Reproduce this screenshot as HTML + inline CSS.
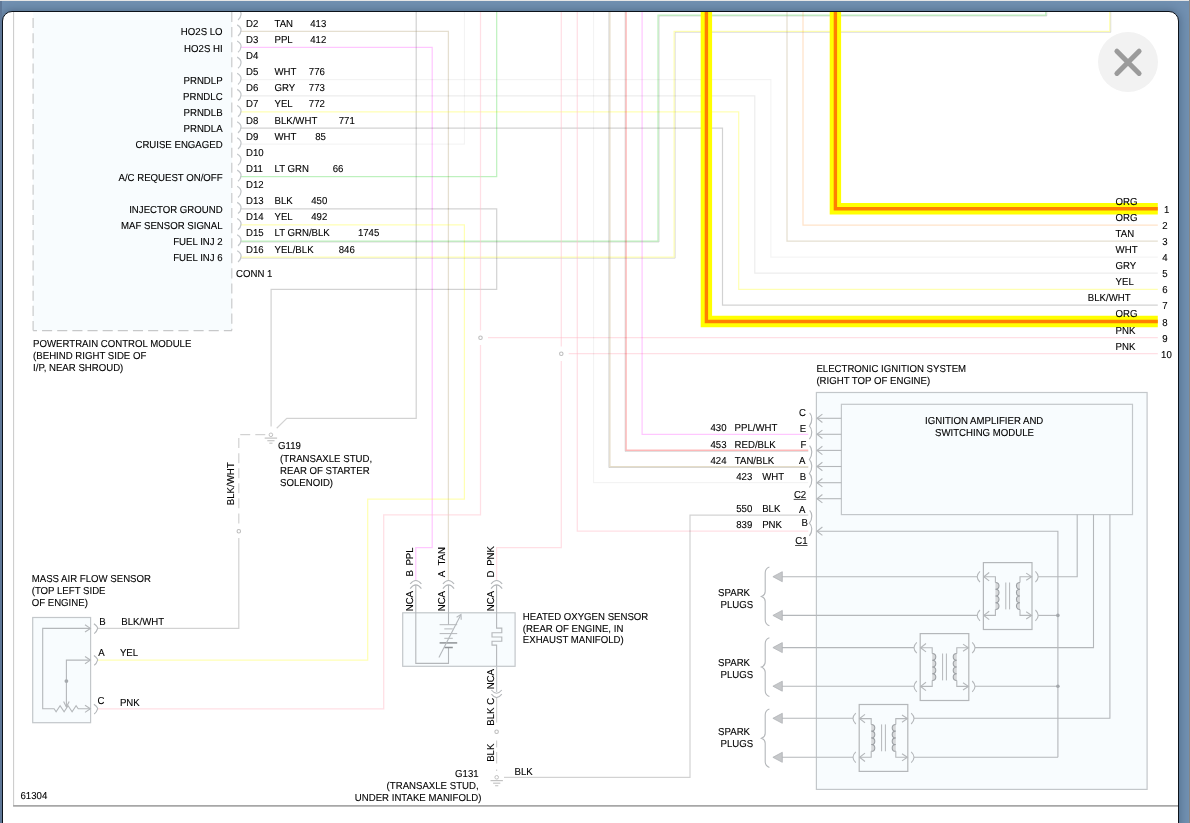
<!DOCTYPE html>
<html lang="en"><head><meta charset="utf-8"><title>Wiring Diagram</title>
<style>
html,body{margin:0;padding:0}
body{width:1190px;height:823px;overflow:hidden;position:relative;background:#7190b1;font-family:"Liberation Sans",Arial,sans-serif}
.topstrip{position:absolute;left:0;top:0;width:1190px;height:1px;background:#e6e6e6}
.rightstrip{position:absolute;left:1189px;top:0;width:1px;height:823px;background:#858585}
.leftshade{position:absolute;left:0;top:1px;width:2px;height:822px;background:#5e7797}
.dialog{position:absolute;left:2px;top:11px;width:1175px;height:840px;background:#fff;border:1px solid #0b1119;border-radius:10px;box-shadow:0 0 8px 1px rgba(20,35,55,.32)}
.sheet{position:absolute;left:13px;top:12px;width:1165px;height:793px;border-left:1.3px solid #c4c4c4;border-bottom:1.6px solid #a6a6a6;box-sizing:content-box}
svg{position:absolute;left:0;top:0;opacity:.999;will-change:transform}
svg text{font-family:"Liberation Sans",Arial,sans-serif;text-rendering:geometricPrecision}
.close{position:absolute;left:1098px;top:32px;width:60px;height:60px;border-radius:50%;background:#f2f2f2}
</style></head><body>
<div class="topstrip"></div>
<div class="dialog"></div><div class="leftshade"></div>
<div class="rightstrip"></div>
<svg width="1190" height="823" viewBox="0 0 1190 823">
<defs><clipPath id="inner"><rect x="3" y="12" width="1175" height="811"/></clipPath></defs>
<g clip-path="url(#inner)">
<path d="M13.6 12 V806" stroke="#cbcbcb" stroke-width="1.05" fill="none"/>
<path d="M13.1 805.8 H1178" stroke="#a7a7a7" stroke-width="1.8" fill="none"/>
<g id="boxes">
<rect x="33.1" y="12" width="198.9" height="318.5" fill="#f8fcfe"/>
<path d="M33.1 12.93 V330.5" stroke="#c7c8c9" stroke-width="1.15" fill="none" stroke-dasharray="10.08 5.07" stroke-dashoffset="10.08"/>
<path d="M33.1 330.55 H232" stroke="#c7c8c9" stroke-width="1.15" fill="none" stroke-dasharray="10.08 5.07" stroke-dashoffset="6.2"/>
<path d="M231.8 12 V330.5" stroke="#c7c8c9" stroke-width="1.15" fill="none" stroke-dasharray="10.05 5.03"/>
<rect x="32.7" y="617.5" width="57.9" height="105.2" fill="#f8fcfe" stroke="#c3c7ca" stroke-width="1.2"/>
<rect x="402.7" y="612.8" width="112.4" height="53.5" fill="#f8fcfe" stroke="#c3c7ca" stroke-width="1.2"/>
<rect x="816.4" y="392.5" width="330.7" height="396.9" fill="#f8fcfe" stroke="#c3c7ca" stroke-width="1.2"/>
<rect x="841.4" y="404.3" width="291.1" height="110.3" fill="none" stroke="#c3c7ca" stroke-width="1.2"/>
</g>
<g id="wires">
<path d="M416.2 12 L416.2 418.3 L286.8 418.3 L276.7 428.3" stroke="rgba(0,0,0,0.18)" stroke-width="1.25" fill="none" />
<path d="M240.5 31.25 L448.4 31.25 L448.4 580" stroke="rgba(178,160,118,0.34)" stroke-width="1.25" fill="none" />
<path d="M240.5 47.39 L432.2 47.39 L432.2 547.7 L415.8 547.7 L415.8 580" stroke="rgba(255,0,255,0.225)" stroke-width="1.25" fill="none" />
<path d="M240.5 79.67 L770.9 79.67 L770.9 257.2 L1157.8 257.2" stroke="rgba(0,0,0,0.05)" stroke-width="1.25" fill="none" />
<path d="M240.5 95.81 L754.8 95.81 L754.8 273.2 L1157.8 273.2" stroke="rgba(0,0,0,0.08)" stroke-width="1.25" fill="none" />
<path d="M240.5 111.95 L738.7 111.95 L738.7 289.3 L1157.8 289.3" stroke="rgba(255,255,0,0.30)" stroke-width="1.25" fill="none" />
<path d="M240.5 128.09 L722.5 128.09 L722.5 305.2 L1157.8 305.2" stroke="rgba(0,0,0,0.18)" stroke-width="1.25" fill="none" />
<path d="M240.5 144.23 L464.4 144.23 L464.4 12" stroke="rgba(0,0,0,0.05)" stroke-width="1.25" fill="none" />
<path d="M240.5 176.51 L496.7 176.51 L496.7 12" stroke="rgba(0,200,0,0.26)" stroke-width="1.25" fill="none" />
<path d="M240.5 208.79 L496.7 208.79 L496.7 289.4 L271.1 289.4 L271.1 426.5" stroke="rgba(0,0,0,0.18)" stroke-width="1.25" fill="none" />
<path d="M240.5 224.93 L464.4 224.93 L464.4 499.1 L367.7 499.1 L367.7 660.2 L97.7 660.2" stroke="rgba(255,255,0,0.30)" stroke-width="1.25" fill="none" />
<path d="M240.5 242.07 L659.1 242.07 L659.1 16 L1046.8 16 L1046.8 12" stroke="rgba(0,0,0,0.16)" stroke-width="0.9" fill="none" />
<path d="M240.5 241.07 L658 241.07 L658 15 L1045.7 15 L1045.7 12" stroke="rgba(0,200,0,0.26)" stroke-width="1.25" fill="none" />
<path d="M240.5 258.21 L675.2 258.21 L675.2 32.3 L1110.8 32.3 L1110.8 12" stroke="rgba(0,0,0,0.16)" stroke-width="0.9" fill="none" />
<path d="M240.5 257.21 L674.1 257.21 L674.1 31.3 L1109.7 31.3 L1109.7 12" stroke="rgba(255,255,0,0.30)" stroke-width="1.25" fill="none" />
<path d="M480.5 12 L480.5 330.5" stroke="rgba(255,192,203,0.5)" stroke-width="1.25" fill="none" />
<path d="M480.5 345 L480.5 514.8 L383.7 514.8 L383.7 708.9 L97.7 708.9" stroke="rgba(255,192,203,0.5)" stroke-width="1.25" fill="none" />
<path d="M488 337.6 L1157.8 337.6" stroke="rgba(255,192,203,0.5)" stroke-width="1.25" fill="none" />
<path d="M561.3 12 L561.3 346.5" stroke="rgba(255,192,203,0.5)" stroke-width="1.25" fill="none" />
<path d="M561.3 361 L561.3 547.7 L496.6 547.7 L496.6 580" stroke="rgba(255,192,203,0.5)" stroke-width="1.25" fill="none" />
<path d="M568.7 353.6 L1157.8 353.6" stroke="rgba(255,192,203,0.5)" stroke-width="1.25" fill="none" />
<path d="M577.3 12 L577.3 531.2 L808.3 531.2" stroke="rgba(255,192,203,0.5)" stroke-width="1.25" fill="none" />
<path d="M593.6 12 L593.6 482.7 L808.3 482.7" stroke="rgba(0,0,0,0.05)" stroke-width="1.25" fill="none" />
<path d="M608.8 12 L608.8 467.5 L808.3 467.5" stroke="rgba(0,0,0,0.16)" stroke-width="0.9" fill="none" />
<path d="M609.9 12 L609.9 466.5 L808.3 466.5" stroke="rgba(190,170,120,0.4)" stroke-width="1.25" fill="none" />
<path d="M625.1 12 L625.1 451.4 L808.3 451.4" stroke="rgba(0,0,0,0.16)" stroke-width="0.9" fill="none" />
<path d="M626.1 12 L626.1 450.3 L808.3 450.3" stroke="rgba(255,0,0,0.275)" stroke-width="1.4" fill="none" />
<path d="M642.1 12 L642.1 434.3 L808.3 434.3" stroke="rgba(255,0,255,0.225)" stroke-width="1.25" fill="none" />
<path d="M787 12 L787 241.2 L1157.8 241.2" stroke="rgba(178,160,118,0.34)" stroke-width="1.25" fill="none" />
<path d="M803 12 L803 225 L1157.8 225" stroke="rgba(255,128,0,0.22)" stroke-width="1.25" fill="none" />
<path d="M808.3 515.2 L690 515.2 L690 777.4 L504 777.4" stroke="rgba(0,0,0,0.18)" stroke-width="1.25" fill="none" />
<path d="M97.7 628.4 L238.8 628.4 L238.8 538" stroke="rgba(0,0,0,0.18)" stroke-width="1.25" fill="none" />
<path d="M265.3 434.5 L238.8 434.5 L238.8 524.2" stroke="rgba(0,0,0,0.18)" stroke-width="1.25" fill="none" stroke-dasharray="10 5.06"/>
<path d="M496.6 666.3 L496.6 692" stroke="#c3c7ca" stroke-width="1.25" fill="none" />
<path d="M496.6 698 L496.6 722.5" stroke="rgba(0,0,0,0.18)" stroke-width="1.25" fill="none" />
<path d="M496.6 740.4 L496.6 771" stroke="rgba(0,0,0,0.18)" stroke-width="1.25" fill="none" stroke-dasharray="7 4.5 11.5 6 1.5 20"/>
</g>
<g id="hl" fill="none" stroke-linejoin="miter" stroke-linecap="butt">
<path d="M706.4 12 V321.5 H1157.8" stroke="#ffff00" stroke-width="11.4"/>
<path d="M835.4 12 V208.7 H1157.8" stroke="#ffff00" stroke-width="11.4"/>
<path d="M706.4 12 V321.5 H1157.8" stroke="#ff7f00" stroke-width="3.4"/>
<path d="M835.4 12 V208.7 H1157.8" stroke="#ff7f00" stroke-width="3.4"/>
</g>
<g id="symbols">
<circle cx="480.5" cy="337.7" r="1.75" fill="#fff" stroke="#bcbcbc" stroke-width="1.05"/>
<circle cx="561.3" cy="353.7" r="1.75" fill="#fff" stroke="#bcbcbc" stroke-width="1.05"/>
<circle cx="238.8" cy="531.3" r="1.75" fill="#fff" stroke="#bcbcbc" stroke-width="1.05"/>
<circle cx="496.6" cy="731.7" r="1.75" fill="#fff" stroke="#bcbcbc" stroke-width="1.05"/>
<path d="M237.2 8.71 C239.6 10.11 241.3 12.51 241 14.51 C240.8 16.91 239.8 18.71 238 19.91" stroke="#c3c7ca" stroke-width="1.25" fill="none" />
<path d="M237.2 24.85 C239.6 26.25 241.3 28.65 241 30.65 C240.8 33.05 239.8 34.85 238 36.05" stroke="#c3c7ca" stroke-width="1.25" fill="none" />
<path d="M237.2 40.99 C239.6 42.39 241.3 44.79 241 46.79 C240.8 49.19 239.8 50.99 238 52.19" stroke="#c3c7ca" stroke-width="1.25" fill="none" />
<path d="M237.2 57.13 C239.6 58.53 241.3 60.93 241 62.93 C240.8 65.33 239.8 67.13 238 68.33" stroke="#c3c7ca" stroke-width="1.25" fill="none" />
<path d="M237.2 73.27 C239.6 74.67 241.3 77.07 241 79.07 C240.8 81.47 239.8 83.27 238 84.47" stroke="#c3c7ca" stroke-width="1.25" fill="none" />
<path d="M237.2 89.41 C239.6 90.81 241.3 93.21 241 95.21 C240.8 97.61 239.8 99.41 238 100.61" stroke="#c3c7ca" stroke-width="1.25" fill="none" />
<path d="M237.2 105.55 C239.6 106.95 241.3 109.35 241 111.35 C240.8 113.75 239.8 115.55 238 116.75" stroke="#c3c7ca" stroke-width="1.25" fill="none" />
<path d="M237.2 121.69 C239.6 123.09 241.3 125.49 241 127.49 C240.8 129.89 239.8 131.69 238 132.89" stroke="#c3c7ca" stroke-width="1.25" fill="none" />
<path d="M237.2 137.83 C239.6 139.23 241.3 141.63 241 143.63 C240.8 146.03 239.8 147.83 238 149.03" stroke="#c3c7ca" stroke-width="1.25" fill="none" />
<path d="M237.2 153.97 C239.6 155.37 241.3 157.77 241 159.77 C240.8 162.17 239.8 163.97 238 165.17" stroke="#c3c7ca" stroke-width="1.25" fill="none" />
<path d="M237.2 170.11 C239.6 171.51 241.3 173.91 241 175.91 C240.8 178.31 239.8 180.11 238 181.31" stroke="#c3c7ca" stroke-width="1.25" fill="none" />
<path d="M237.2 186.25 C239.6 187.65 241.3 190.05 241 192.05 C240.8 194.45 239.8 196.25 238 197.45" stroke="#c3c7ca" stroke-width="1.25" fill="none" />
<path d="M237.2 202.39 C239.6 203.79 241.3 206.19 241 208.19 C240.8 210.59 239.8 212.39 238 213.59" stroke="#c3c7ca" stroke-width="1.25" fill="none" />
<path d="M237.2 218.53 C239.6 219.93 241.3 222.33 241 224.33 C240.8 226.73 239.8 228.53 238 229.73" stroke="#c3c7ca" stroke-width="1.25" fill="none" />
<path d="M237.2 234.67 C239.6 236.07 241.3 238.47 241 240.47 C240.8 242.87 239.8 244.67 238 245.87" stroke="#c3c7ca" stroke-width="1.25" fill="none" />
<path d="M237.2 250.81 C239.6 252.21 241.3 254.61 241 256.61 C240.8 259.01 239.8 260.81 238 262.01" stroke="#c3c7ca" stroke-width="1.25" fill="none" />
<circle cx="270.9" cy="434.8" r="1.8" fill="#fff" stroke="#c0c0c0" stroke-width="1.0"/>
<path d="M264.7 438.1 L277.1 438.1" stroke="#c2c2c2" stroke-width="1.2" fill="none" />
<path d="M267.3 440.7 L274.5 440.7" stroke="#c6c6c6" stroke-width="1.2" fill="none" />
<path d="M269.3 443.2 L272.5 443.2" stroke="#cacaca" stroke-width="1.2" fill="none" />
<circle cx="496.7" cy="777.3" r="1.8" fill="#fff" stroke="#c0c0c0" stroke-width="1.0"/>
<path d="M490.5 780.6 L502.9 780.6" stroke="#c2c2c2" stroke-width="1.2" fill="none" />
<path d="M493.1 783.2 L500.3 783.2" stroke="#c6c6c6" stroke-width="1.2" fill="none" />
<path d="M495.1 785.7 L498.3 785.7" stroke="#cacaca" stroke-width="1.2" fill="none" />
<path d="M90.4 628.4 L42.7 628.4 L42.7 708.8 L54.1 708.8 L56.1 711.8 L60.1 705.8 L64.1 711.8 L68.1 705.8 L72.1 711.8 L76.1 705.8 L78.2 708.8 L90.4 708.8" stroke="#b4b7ba" stroke-width="1.1" fill="none" />
<path d="M90.4 660.1 L66.4 660.1 L66.4 706.5" stroke="#b4b7ba" stroke-width="1.1" fill="none" />
<path d="M63.6 701.5 L66.4 707 L69.2 701.5" stroke="#b4b7ba" stroke-width="1.1" fill="none" />
<path d="M85 624.8 L90.4 628.4 L85 632" stroke="#b4b7ba" stroke-width="1.1" fill="none" />
<path d="M85 656.5 L90.4 660.1 L85 663.7" stroke="#b4b7ba" stroke-width="1.1" fill="none" />
<path d="M85 705.2 L90.4 708.8 L85 712.4" stroke="#b4b7ba" stroke-width="1.1" fill="none" />
<circle cx="66.4" cy="681.1" r="1.9" fill="#a6aaae"/>
<path d="M93.9 623.8 Q98.6 627.4 97.4 629 Q96.6 632 94.2 633.6" stroke="#b4b7ba" stroke-width="1.1" fill="none" />
<path d="M93.9 655.5 Q98.6 659.1 97.4 660.7 Q96.6 663.7 94.2 665.3" stroke="#b4b7ba" stroke-width="1.1" fill="none" />
<path d="M93.9 704.2 Q98.6 707.8 97.4 709.4 Q96.6 712.4 94.2 714" stroke="#b4b7ba" stroke-width="1.1" fill="none" />
<path d="M415.8 592 L415.8 663.4 L448.5 663.4 L448.5 647.5" stroke="#b4b7ba" stroke-width="1.1" fill="none" />
<path d="M448.5 592 L448.5 624.7" stroke="#b4b7ba" stroke-width="1.1" fill="none" />
<path d="M439.6 624.7 L457.2 624.7" stroke="#b4b7ba" stroke-width="1.0" fill="none" />
<path d="M444.3 628.9 L452.8 628.9" stroke="#b4b7ba" stroke-width="1.0" fill="none" />
<path d="M439.6 633.6 L457.2 633.6" stroke="#b4b7ba" stroke-width="1.0" fill="none" />
<path d="M444.3 638.3 L452.8 638.3" stroke="#b4b7ba" stroke-width="1.0" fill="none" />
<path d="M439.6 642.9 L457.2 642.9" stroke="#8f9396" stroke-width="1.5" fill="none" />
<path d="M444.3 647.5 L452.8 647.5" stroke="#8f9396" stroke-width="1.5" fill="none" />
<path d="M438.9 657.4 L460.6 615.2" stroke="#b4b8bc" stroke-width="1.1" fill="none" />
<path d="M456.6 617.2 L461 614.4 L461.2 619.8" stroke="#b4b8bc" stroke-width="1.1" fill="none" />
<path d="M496.6 592 L496.6 628.1 L501.8 628.1 L501.8 632.7 L492 632.7 L492 637 L501.8 637 L501.8 641.2 L492 641.2 L492 645.1 L496.6 645.1 L496.6 666.3" stroke="#b4b7ba" stroke-width="1.1" fill="none" />
<path d="M410.2 584 Q415.8 577 421.4 584" stroke="#b4b7ba" stroke-width="1.1" fill="none" />
<path d="M410.2 588.6 Q415.8 581.2 421.4 588.6" stroke="#b4b7ba" stroke-width="1.1" fill="none" />
<path d="M415.8 585 L415.8 592" stroke="#b4b7ba" stroke-width="1.1" fill="none" />
<path d="M442.9 584 Q448.5 577 454.1 584" stroke="#b4b7ba" stroke-width="1.1" fill="none" />
<path d="M442.9 588.6 Q448.5 581.2 454.1 588.6" stroke="#b4b7ba" stroke-width="1.1" fill="none" />
<path d="M448.5 585 L448.5 592" stroke="#b4b7ba" stroke-width="1.1" fill="none" />
<path d="M491 584 Q496.6 577 502.2 584" stroke="#b4b7ba" stroke-width="1.1" fill="none" />
<path d="M491 588.6 Q496.6 581.2 502.2 588.6" stroke="#b4b7ba" stroke-width="1.1" fill="none" />
<path d="M496.6 585 L496.6 592" stroke="#b4b7ba" stroke-width="1.1" fill="none" />
<path d="M491.4 690 Q496.6 696.4 501.8 690" stroke="#b4b7ba" stroke-width="1.1" fill="none" />
<path d="M491.4 694.2 Q496.6 701 501.8 694.2" stroke="#b4b7ba" stroke-width="1.1" fill="none" />
<path d="M817 418.3 L841.4 418.3" stroke="#b4b7ba" stroke-width="1.1" fill="none" />
<path d="M822.4 414.1 L817 418.3 L822.4 422.5" stroke="#b4b7ba" stroke-width="1.1" fill="none" />
<path d="M817 434.3 L841.4 434.3" stroke="#b4b7ba" stroke-width="1.1" fill="none" />
<path d="M822.4 430.1 L817 434.3 L822.4 438.5" stroke="#b4b7ba" stroke-width="1.1" fill="none" />
<path d="M817 450.4 L841.4 450.4" stroke="#b4b7ba" stroke-width="1.1" fill="none" />
<path d="M822.4 446.2 L817 450.4 L822.4 454.6" stroke="#b4b7ba" stroke-width="1.1" fill="none" />
<path d="M817 466.5 L841.4 466.5" stroke="#b4b7ba" stroke-width="1.1" fill="none" />
<path d="M822.4 462.3 L817 466.5 L822.4 470.7" stroke="#b4b7ba" stroke-width="1.1" fill="none" />
<path d="M817 482.7 L841.4 482.7" stroke="#b4b7ba" stroke-width="1.1" fill="none" />
<path d="M822.4 478.5 L817 482.7 L822.4 486.9" stroke="#b4b7ba" stroke-width="1.1" fill="none" />
<path d="M817 498.7 L841.4 498.7" stroke="#b4b7ba" stroke-width="1.1" fill="none" />
<path d="M822.4 494.5 L817 498.7 L822.4 502.9" stroke="#b4b7ba" stroke-width="1.1" fill="none" />
<path d="M817 531.2 L1057.9 531.2 L1057.9 757.3" stroke="#b4b7ba" stroke-width="1.1" fill="none" />
<path d="M822.4 527 L817 531.2 L822.4 535.4" stroke="#b4b7ba" stroke-width="1.1" fill="none" />
<path d="M809.6 412.8 C812.2 415.4 812.9 421.5 809.4 426.1 C812.2 428.7 812.9 434.6 809.4 439.2" stroke="#b4b7ba" stroke-width="1.15" fill="none" />
<path d="M809.6 445.6 C812.2 448.2 812.9 455 809.4 459.6 C812.2 462.2 812.9 468.9 809.4 473.5 C812.2 476.1 812.9 482.9 809.4 487.5" stroke="#b4b7ba" stroke-width="1.15" fill="none" />
<path d="M809.6 510.3 C812.2 512.9 812.9 518.5 809.4 523.1 C812.2 525.7 812.9 531.3 809.4 535.9" stroke="#b4b7ba" stroke-width="1.15" fill="none" />
<rect x="983.4" y="562.6" width="48.6" height="66.9" fill="none" stroke="#b4b7ba" stroke-width="1.2"/>
<path d="M995.4 582.5 C1000.2 582.5 1000.2 589.225 995.4 589.225 C1000.2 589.225 1000.2 595.95 995.4 595.95 C1000.2 595.95 1000.2 602.675 995.4 602.675 C1000.2 602.675 1000.2 609.4 995.4 609.4" fill="#d6d8da" stroke="#9a9ea2" stroke-width="1.05"/>
<path d="M1020 582.5 C1015.2 582.5 1015.2 589.225 1020 589.225 C1015.2 589.225 1015.2 595.95 1020 595.95 C1015.2 595.95 1015.2 602.675 1020 602.675 C1015.2 602.675 1015.2 609.4 1020 609.4" fill="#d6d8da" stroke="#9a9ea2" stroke-width="1.05"/>
<path d="M983.7 576.7 L995.4 576.7 L995.4 582.5" stroke="#b4b7ba" stroke-width="1.1" fill="none" />
<path d="M995.4 609.4 L995.4 615.4 L983.7 615.4" stroke="#b4b7ba" stroke-width="1.1" fill="none" />
<path d="M1031.7 576.7 L1020 576.7 L1020 582.5" stroke="#b4b7ba" stroke-width="1.1" fill="none" />
<path d="M1020 609.4 L1020 615.4 L1031.7 615.4" stroke="#b4b7ba" stroke-width="1.1" fill="none" />
<path d="M989.2 572.5 L983.8 576.7 L989.2 580.9" stroke="#b4b7ba" stroke-width="1.1" fill="none" />
<path d="M1026.2 573.1 L1031.6 576.7 L1026.2 580.3" stroke="#b4b7ba" stroke-width="1.1" fill="none" />
<path d="M980 571.3 Q974.4 576.7 980 582.1" stroke="#b4b7ba" stroke-width="1.1" fill="none" />
<path d="M1035.4 571.3 Q1041 576.7 1035.4 582.1" stroke="#b4b7ba" stroke-width="1.1" fill="none" />
<path d="M989.2 611.2 L983.8 615.4 L989.2 619.6" stroke="#b4b7ba" stroke-width="1.1" fill="none" />
<path d="M1026.2 611.8 L1031.6 615.4 L1026.2 619" stroke="#b4b7ba" stroke-width="1.1" fill="none" />
<path d="M980 610 Q974.4 615.4 980 620.8" stroke="#b4b7ba" stroke-width="1.1" fill="none" />
<path d="M1035.4 610 Q1041 615.4 1035.4 620.8" stroke="#b4b7ba" stroke-width="1.1" fill="none" />
<path d="M1005.8 582.5 L1005.8 609.4" stroke="#b4b7ba" stroke-width="1.0" fill="none" />
<path d="M1009.6 582.5 L1009.6 609.4" stroke="#b4b7ba" stroke-width="1.0" fill="none" />
<rect x="920.2" y="633.6" width="48.6" height="66.9" fill="none" stroke="#b4b7ba" stroke-width="1.2"/>
<path d="M932.2 653.5 C937 653.5 937 660.225 932.2 660.225 C937 660.225 937 666.95 932.2 666.95 C937 666.95 937 673.675 932.2 673.675 C937 673.675 937 680.4 932.2 680.4" fill="#d6d8da" stroke="#9a9ea2" stroke-width="1.05"/>
<path d="M956.8 653.5 C952 653.5 952 660.225 956.8 660.225 C952 660.225 952 666.95 956.8 666.95 C952 666.95 952 673.675 956.8 673.675 C952 673.675 952 680.4 956.8 680.4" fill="#d6d8da" stroke="#9a9ea2" stroke-width="1.05"/>
<path d="M920.5 647.7 L932.2 647.7 L932.2 653.5" stroke="#b4b7ba" stroke-width="1.1" fill="none" />
<path d="M932.2 680.4 L932.2 686.4 L920.5 686.4" stroke="#b4b7ba" stroke-width="1.1" fill="none" />
<path d="M968.5 647.7 L956.8 647.7 L956.8 653.5" stroke="#b4b7ba" stroke-width="1.1" fill="none" />
<path d="M956.8 680.4 L956.8 686.4 L968.5 686.4" stroke="#b4b7ba" stroke-width="1.1" fill="none" />
<path d="M926 643.5 L920.6 647.7 L926 651.9" stroke="#b4b7ba" stroke-width="1.1" fill="none" />
<path d="M963 644.1 L968.4 647.7 L963 651.3" stroke="#b4b7ba" stroke-width="1.1" fill="none" />
<path d="M916.8 642.3 Q911.2 647.7 916.8 653.1" stroke="#b4b7ba" stroke-width="1.1" fill="none" />
<path d="M972.2 642.3 Q977.8 647.7 972.2 653.1" stroke="#b4b7ba" stroke-width="1.1" fill="none" />
<path d="M926 682.2 L920.6 686.4 L926 690.6" stroke="#b4b7ba" stroke-width="1.1" fill="none" />
<path d="M963 682.8 L968.4 686.4 L963 690" stroke="#b4b7ba" stroke-width="1.1" fill="none" />
<path d="M916.8 681 Q911.2 686.4 916.8 691.8" stroke="#b4b7ba" stroke-width="1.1" fill="none" />
<path d="M972.2 681 Q977.8 686.4 972.2 691.8" stroke="#b4b7ba" stroke-width="1.1" fill="none" />
<path d="M942.6 653.5 L942.6 680.4" stroke="#b4b7ba" stroke-width="1.0" fill="none" />
<path d="M946.4 653.5 L946.4 680.4" stroke="#b4b7ba" stroke-width="1.0" fill="none" />
<rect x="859.2" y="704.5" width="48.6" height="66.9" fill="none" stroke="#b4b7ba" stroke-width="1.2"/>
<path d="M871.2 724.4 C876 724.4 876 731.125 871.2 731.125 C876 731.125 876 737.85 871.2 737.85 C876 737.85 876 744.575 871.2 744.575 C876 744.575 876 751.3 871.2 751.3" fill="#d6d8da" stroke="#9a9ea2" stroke-width="1.05"/>
<path d="M895.8 724.4 C891 724.4 891 731.125 895.8 731.125 C891 731.125 891 737.85 895.8 737.85 C891 737.85 891 744.575 895.8 744.575 C891 744.575 891 751.3 895.8 751.3" fill="#d6d8da" stroke="#9a9ea2" stroke-width="1.05"/>
<path d="M859.5 718.6 L871.2 718.6 L871.2 724.4" stroke="#b4b7ba" stroke-width="1.1" fill="none" />
<path d="M871.2 751.3 L871.2 757.3 L859.5 757.3" stroke="#b4b7ba" stroke-width="1.1" fill="none" />
<path d="M907.5 718.6 L895.8 718.6 L895.8 724.4" stroke="#b4b7ba" stroke-width="1.1" fill="none" />
<path d="M895.8 751.3 L895.8 757.3 L907.5 757.3" stroke="#b4b7ba" stroke-width="1.1" fill="none" />
<path d="M865 714.4 L859.6 718.6 L865 722.8" stroke="#b4b7ba" stroke-width="1.1" fill="none" />
<path d="M902 715 L907.4 718.6 L902 722.2" stroke="#b4b7ba" stroke-width="1.1" fill="none" />
<path d="M855.8 713.2 Q850.2 718.6 855.8 724" stroke="#b4b7ba" stroke-width="1.1" fill="none" />
<path d="M911.2 713.2 Q916.8 718.6 911.2 724" stroke="#b4b7ba" stroke-width="1.1" fill="none" />
<path d="M865 753.1 L859.6 757.3 L865 761.5" stroke="#b4b7ba" stroke-width="1.1" fill="none" />
<path d="M902 753.7 L907.4 757.3 L902 760.9" stroke="#b4b7ba" stroke-width="1.1" fill="none" />
<path d="M855.8 751.9 Q850.2 757.3 855.8 762.7" stroke="#b4b7ba" stroke-width="1.1" fill="none" />
<path d="M911.2 751.9 Q916.8 757.3 911.2 762.7" stroke="#b4b7ba" stroke-width="1.1" fill="none" />
<path d="M881.6 724.4 L881.6 751.3" stroke="#b4b7ba" stroke-width="1.0" fill="none" />
<path d="M885.4 724.4 L885.4 751.3" stroke="#b4b7ba" stroke-width="1.0" fill="none" />
<path d="M782 576.7 L977.2 576.7" stroke="#b4b7ba" stroke-width="1.1" fill="none" />
<path d="M772.9 576.7 L782.3 571.7 V581.7 Z" fill="#c6c8ca" stroke="#b0b3b6" stroke-width="0.8"/>
<path d="M782 615.4 L977.2 615.4" stroke="#b4b7ba" stroke-width="1.1" fill="none" />
<path d="M772.9 615.4 L782.3 610.4 V620.4 Z" fill="#c6c8ca" stroke="#b0b3b6" stroke-width="0.8"/>
<path d="M782 647.6 L914 647.6" stroke="#b4b7ba" stroke-width="1.1" fill="none" />
<path d="M772.9 647.6 L782.3 642.6 V652.6 Z" fill="#c6c8ca" stroke="#b0b3b6" stroke-width="0.8"/>
<path d="M782 686.2 L914 686.2" stroke="#b4b7ba" stroke-width="1.1" fill="none" />
<path d="M772.9 686.2 L782.3 681.2 V691.2 Z" fill="#c6c8ca" stroke="#b0b3b6" stroke-width="0.8"/>
<path d="M782 718.3 L853 718.3" stroke="#b4b7ba" stroke-width="1.1" fill="none" />
<path d="M772.9 718.3 L782.3 713.3 V723.3 Z" fill="#c6c8ca" stroke="#b0b3b6" stroke-width="0.8"/>
<path d="M782 757.3 L853 757.3" stroke="#b4b7ba" stroke-width="1.1" fill="none" />
<path d="M772.9 757.3 L782.3 752.3 V762.3 Z" fill="#c6c8ca" stroke="#b0b3b6" stroke-width="0.8"/>
<path d="M1038.2 576.7 L1077.2 576.7 L1077.2 514.6" stroke="#b4b7ba" stroke-width="1.1" fill="none" />
<path d="M1038.2 615.4 L1057.9 615.4" stroke="#b4b7ba" stroke-width="1.1" fill="none" />
<path d="M975 647.6 L1093.5 647.6 L1093.5 514.6" stroke="#b4b7ba" stroke-width="1.1" fill="none" />
<path d="M975 686.2 L1057.9 686.2" stroke="#b4b7ba" stroke-width="1.1" fill="none" />
<path d="M914 718.3 L1109.9 718.3 L1109.9 514.6" stroke="#b4b7ba" stroke-width="1.1" fill="none" />
<path d="M914 757.3 L1057.9 757.3" stroke="#b4b7ba" stroke-width="1.1" fill="none" />
<circle cx="1057.9" cy="615.4" r="1.8" fill="#a4a8ac"/><circle cx="1057.9" cy="686.2" r="1.8" fill="#a4a8ac"/>
<path d="M769.4 567 Q765.2 568.5 765.2 573 V591.4 Q765.2 594.9 761.4 596.4 Q765.2 597.9 765.2 601.4 V619.8 Q765.2 624.3 769.4 625.8" stroke="#b4b7ba" stroke-width="1.1" fill="none" />
<path d="M769.4 637.8 Q765.2 639.3 765.2 643.8 V662.1 Q765.2 665.6 761.4 667.1 Q765.2 668.6 765.2 672.1 V690.4 Q765.2 694.9 769.4 696.4" stroke="#b4b7ba" stroke-width="1.1" fill="none" />
<path d="M769.4 709 Q765.2 710.5 765.2 715 V733.2 Q765.2 736.7 761.4 738.2 Q765.2 739.7 765.2 743.2 V761.4 Q765.2 765.9 769.4 767.4" stroke="#b4b7ba" stroke-width="1.1" fill="none" />
</g>
<g id="labels" fill="#000" stroke="#000" stroke-width="0.12" font-size="10.08px">
<text transform="translate(222.6 35.15) scale(0.955 1)" text-anchor="end">HO2S LO</text>
<text transform="translate(222.6 51.89) scale(0.955 1)" text-anchor="end">HO2S HI</text>
<text transform="translate(222.6 83.57) scale(0.955 1)" text-anchor="end">PRNDLP</text>
<text transform="translate(222.6 99.71) scale(0.955 1)" text-anchor="end">PRNDLC</text>
<text transform="translate(222.6 115.85) scale(0.955 1)" text-anchor="end">PRNDLB</text>
<text transform="translate(222.6 131.99) scale(0.955 1)" text-anchor="end">PRNDLA</text>
<text transform="translate(222.6 148.13) scale(0.955 1)" text-anchor="end">CRUISE ENGAGED</text>
<text transform="translate(222.6 181.21) scale(0.955 1)" text-anchor="end">A/C REQUEST ON/OFF</text>
<text transform="translate(222.6 212.69) scale(0.955 1)" text-anchor="end">INJECTOR GROUND</text>
<text transform="translate(222.6 228.83) scale(0.955 1)" text-anchor="end">MAF SENSOR SIGNAL</text>
<text transform="translate(222.6 244.97) scale(0.955 1)" text-anchor="end">FUEL INJ 2</text>
<text transform="translate(222.6 261.11) scale(0.955 1)" text-anchor="end">FUEL INJ 6</text>
<text transform="translate(246 26.65) scale(0.955 1)">D2</text>
<text transform="translate(274.5 26.65) scale(0.955 1)">TAN</text>
<text transform="translate(310.2 26.65) scale(0.955 1)">413</text>
<text transform="translate(246 42.79) scale(0.955 1)">D3</text>
<text transform="translate(274.5 42.79) scale(0.955 1)">PPL</text>
<text transform="translate(310.2 42.79) scale(0.955 1)">412</text>
<text transform="translate(246 58.93) scale(0.955 1)">D4</text>
<text transform="translate(246 75.07) scale(0.955 1)">D5</text>
<text transform="translate(274.5 75.07) scale(0.955 1)">WHT</text>
<text transform="translate(308.8 75.07) scale(0.955 1)">776</text>
<text transform="translate(246 91.21) scale(0.955 1)">D6</text>
<text transform="translate(274.5 91.21) scale(0.955 1)">GRY</text>
<text transform="translate(308.8 91.21) scale(0.955 1)">773</text>
<text transform="translate(246 107.35) scale(0.955 1)">D7</text>
<text transform="translate(274.5 107.35) scale(0.955 1)">YEL</text>
<text transform="translate(308.8 107.35) scale(0.955 1)">772</text>
<text transform="translate(246 124.29) scale(0.955 1)">D8</text>
<text transform="translate(274.5 124.29) scale(0.955 1)">BLK/WHT</text>
<text transform="translate(338.7 124.29) scale(0.955 1)">771</text>
<text transform="translate(246 140.03) scale(0.955 1)">D9</text>
<text transform="translate(274.5 140.03) scale(0.955 1)">WHT</text>
<text transform="translate(315.2 140.03) scale(0.955 1)">85</text>
<text transform="translate(246 155.77) scale(0.955 1)">D10</text>
<text transform="translate(246 171.91) scale(0.955 1)">D11</text>
<text transform="translate(274.5 171.91) scale(0.955 1)">LT GRN</text>
<text transform="translate(332.7 171.91) scale(0.955 1)">66</text>
<text transform="translate(246 188.05) scale(0.955 1)">D12</text>
<text transform="translate(246 204.19) scale(0.955 1)">D13</text>
<text transform="translate(274.5 204.19) scale(0.955 1)">BLK</text>
<text transform="translate(311.2 204.19) scale(0.955 1)">450</text>
<text transform="translate(246 220.33) scale(0.955 1)">D14</text>
<text transform="translate(274.5 220.33) scale(0.955 1)">YEL</text>
<text transform="translate(311.2 220.33) scale(0.955 1)">492</text>
<text transform="translate(246 236.47) scale(0.955 1)">D15</text>
<text transform="translate(274.5 236.47) scale(0.955 1)">LT GRN/BLK</text>
<text transform="translate(357.9 236.47) scale(0.955 1)">1745</text>
<text transform="translate(246 252.61) scale(0.955 1)">D16</text>
<text transform="translate(274.5 252.61) scale(0.955 1)">YEL/BLK</text>
<text transform="translate(338.7 252.61) scale(0.955 1)">846</text>
<text transform="translate(236 276.9) scale(0.955 1)">CONN 1</text>
<text transform="translate(33.1 346.5) scale(0.955 1)">POWERTRAIN CONTROL MODULE</text>
<text transform="translate(33.1 358.7) scale(0.955 1)">(BEHIND RIGHT SIDE OF</text>
<text transform="translate(33.1 371.1) scale(0.955 1)">I/P, NEAR SHROUD)</text>
<text transform="translate(278.1 448.8) scale(0.955 1)">G119</text>
<text transform="translate(280.1 462) scale(0.955 1)">(TRANSAXLE STUD,</text>
<text transform="translate(280.1 474.1) scale(0.955 1)">REAR OF STARTER</text>
<text transform="translate(280.1 486.1) scale(0.955 1)">SOLENOID)</text>
<text transform="translate(234.2 505.2) rotate(-90) scale(0.955 1)">BLK/WHT</text>
<text transform="translate(31.7 581.7) scale(0.955 1)">MASS AIR FLOW SENSOR</text>
<text transform="translate(31.7 593.7) scale(0.955 1)">(TOP LEFT SIDE</text>
<text transform="translate(31.7 605.7) scale(0.955 1)">OF ENGINE)</text>
<text transform="translate(99.3 624.6) scale(0.955 1)">B</text>
<text transform="translate(121.3 624.6) scale(0.955 1)">BLK/WHT</text>
<text transform="translate(98.3 655.9) scale(0.955 1)">A</text>
<text transform="translate(119.9 655.9) scale(0.955 1)">YEL</text>
<text transform="translate(97.5 703.8) scale(0.955 1)">C</text>
<text transform="translate(119.9 705.9) scale(0.955 1)">PNK</text>
<text transform="translate(20.5 798.8) scale(0.955 1)">61304</text>
<text transform="translate(412.9 576.6) rotate(-90) scale(0.955 1)">B</text>
<text transform="translate(412.9 565.6) rotate(-90) scale(0.955 1)">PPL</text>
<text transform="translate(412.9 611.3) rotate(-90) scale(0.955 1)">NCA</text>
<text transform="translate(445.4 577.2) rotate(-90) scale(0.955 1)">A</text>
<text transform="translate(445.4 565.6) rotate(-90) scale(0.955 1)">TAN</text>
<text transform="translate(445.4 611.3) rotate(-90) scale(0.955 1)">NCA</text>
<text transform="translate(493.6 577.4) rotate(-90) scale(0.955 1)">D</text>
<text transform="translate(493.6 565.8) rotate(-90) scale(0.955 1)">PNK</text>
<text transform="translate(493.6 611.3) rotate(-90) scale(0.955 1)">NCA</text>
<text transform="translate(493.6 689.3) rotate(-90) scale(0.955 1)">NCA</text>
<text transform="translate(493.6 725.7) rotate(-90) scale(0.955 1)">BLK C</text>
<text transform="translate(493.6 761.8) rotate(-90) scale(0.955 1)">BLK</text>
<text transform="translate(522.8 620) scale(0.955 1)">HEATED OXYGEN SENSOR</text>
<text transform="translate(522.8 632.1) scale(0.955 1)">(REAR OF ENGINE, IN</text>
<text transform="translate(522.8 643.3) scale(0.955 1)">EXHAUST MANIFOLD)</text>
<text transform="translate(478.6 776.6) scale(0.955 1)" text-anchor="end">G131</text>
<text transform="translate(478.6 788.6) scale(0.955 1)" text-anchor="end">(TRANSAXLE STUD,</text>
<text transform="translate(481.4 800.6) scale(0.955 1)" text-anchor="end">UNDER INTAKE MANIFOLD)</text>
<text transform="translate(514.6 774.6) scale(0.955 1)">BLK</text>
<text transform="translate(816.4 371.8) scale(0.955 1)">ELECTRONIC IGNITION SYSTEM</text>
<text transform="translate(816.4 383.8) scale(0.955 1)">(RIGHT TOP OF ENGINE)</text>
<text transform="translate(984.2 424.4) scale(0.955 1)" text-anchor="middle">IGNITION AMPLIFIER AND</text>
<text transform="translate(984.5 436.3) scale(0.955 1)" text-anchor="middle">SWITCHING MODULE</text>
<text transform="translate(798.9 415.7) scale(0.955 1)">C</text>
<text transform="translate(799.7 431.7) scale(0.955 1)">E</text>
<text transform="translate(800.5 447.8) scale(0.955 1)">F</text>
<text transform="translate(798.9 463.7) scale(0.955 1)">A</text>
<text transform="translate(799.7 479.8) scale(0.955 1)">B</text>
<text transform="translate(710.5 430.9) scale(0.955 1)">430</text>
<text transform="translate(734.6 430.9) scale(0.955 1)">PPL/WHT</text>
<text transform="translate(710.5 447.8) scale(0.955 1)">453</text>
<text transform="translate(734.6 447.8) scale(0.955 1)">RED/BLK</text>
<text transform="translate(710.5 463.7) scale(0.955 1)">424</text>
<text transform="translate(734.8 463.7) scale(0.955 1)">TAN/BLK</text>
<text transform="translate(736.2 479.8) scale(0.955 1)">423</text>
<text transform="translate(762.2 479.8) scale(0.955 1)">WHT</text>
<text transform="translate(793.9 498.1) scale(0.955 1)">C2</text>
<path d="M793.7 499.4 H806.2" stroke="#111" stroke-width="0.75"/>
<text transform="translate(736.2 512.2) scale(0.955 1)">550</text>
<text transform="translate(762.2 512.2) scale(0.955 1)">BLK</text>
<text transform="translate(798.9 512.6) scale(0.955 1)">A</text>
<text transform="translate(736.2 528) scale(0.955 1)">839</text>
<text transform="translate(762.2 528) scale(0.955 1)">PNK</text>
<text transform="translate(801.5 526.4) scale(0.955 1)">B</text>
<text transform="translate(795.3 544.2) scale(0.955 1)">C1</text>
<path d="M795.1 545.5 H807.5" stroke="#111" stroke-width="0.75"/>
<text transform="translate(718.1 596) scale(0.955 1)">SPARK</text>
<text transform="translate(720.5 607.7) scale(0.955 1)">PLUGS</text>
<text transform="translate(718.1 665.8) scale(0.955 1)">SPARK</text>
<text transform="translate(720.5 677.5) scale(0.955 1)">PLUGS</text>
<text transform="translate(718.1 734.8) scale(0.955 1)">SPARK</text>
<text transform="translate(720.5 746.5) scale(0.955 1)">PLUGS</text>
<text transform="translate(1115.6 205.3) scale(0.955 1)">ORG</text>
<text transform="translate(1164 212.8) scale(0.955 1)">1</text>
<text transform="translate(1115.6 220.8) scale(0.955 1)">ORG</text>
<text transform="translate(1162.2 229.1) scale(0.955 1)">2</text>
<text transform="translate(1115.6 236.7) scale(0.955 1)">TAN</text>
<text transform="translate(1162.2 245.3) scale(0.955 1)">3</text>
<text transform="translate(1115.6 252.8) scale(0.955 1)">WHT</text>
<text transform="translate(1162.2 261.3) scale(0.955 1)">4</text>
<text transform="translate(1115.6 268.8) scale(0.955 1)">GRY</text>
<text transform="translate(1162.2 277.3) scale(0.955 1)">5</text>
<text transform="translate(1115.6 284.8) scale(0.955 1)">YEL</text>
<text transform="translate(1162.2 293.4) scale(0.955 1)">6</text>
<text transform="translate(1087.8 301.4) scale(0.955 1)">BLK/WHT</text>
<text transform="translate(1162.2 309.3) scale(0.955 1)">7</text>
<text transform="translate(1115.6 317.4) scale(0.955 1)">ORG</text>
<text transform="translate(1162.2 325.6) scale(0.955 1)">8</text>
<text transform="translate(1115.6 333.8) scale(0.955 1)">PNK</text>
<text transform="translate(1162.2 341.7) scale(0.955 1)">9</text>
<text transform="translate(1115.6 349.7) scale(0.955 1)">PNK</text>
<text transform="translate(1161.1 357.7) scale(0.955 1)">10</text>
</g>
</g>
</svg>
<div class="close"><svg width="60" height="60" viewBox="0 0 60 60"><path d="M18.9 19.2 L41.1 41.4 M41.1 19.2 L18.9 41.4" stroke="#9b9b9b" stroke-width="5" stroke-linecap="round" fill="none"/></svg></div>
</body></html>
